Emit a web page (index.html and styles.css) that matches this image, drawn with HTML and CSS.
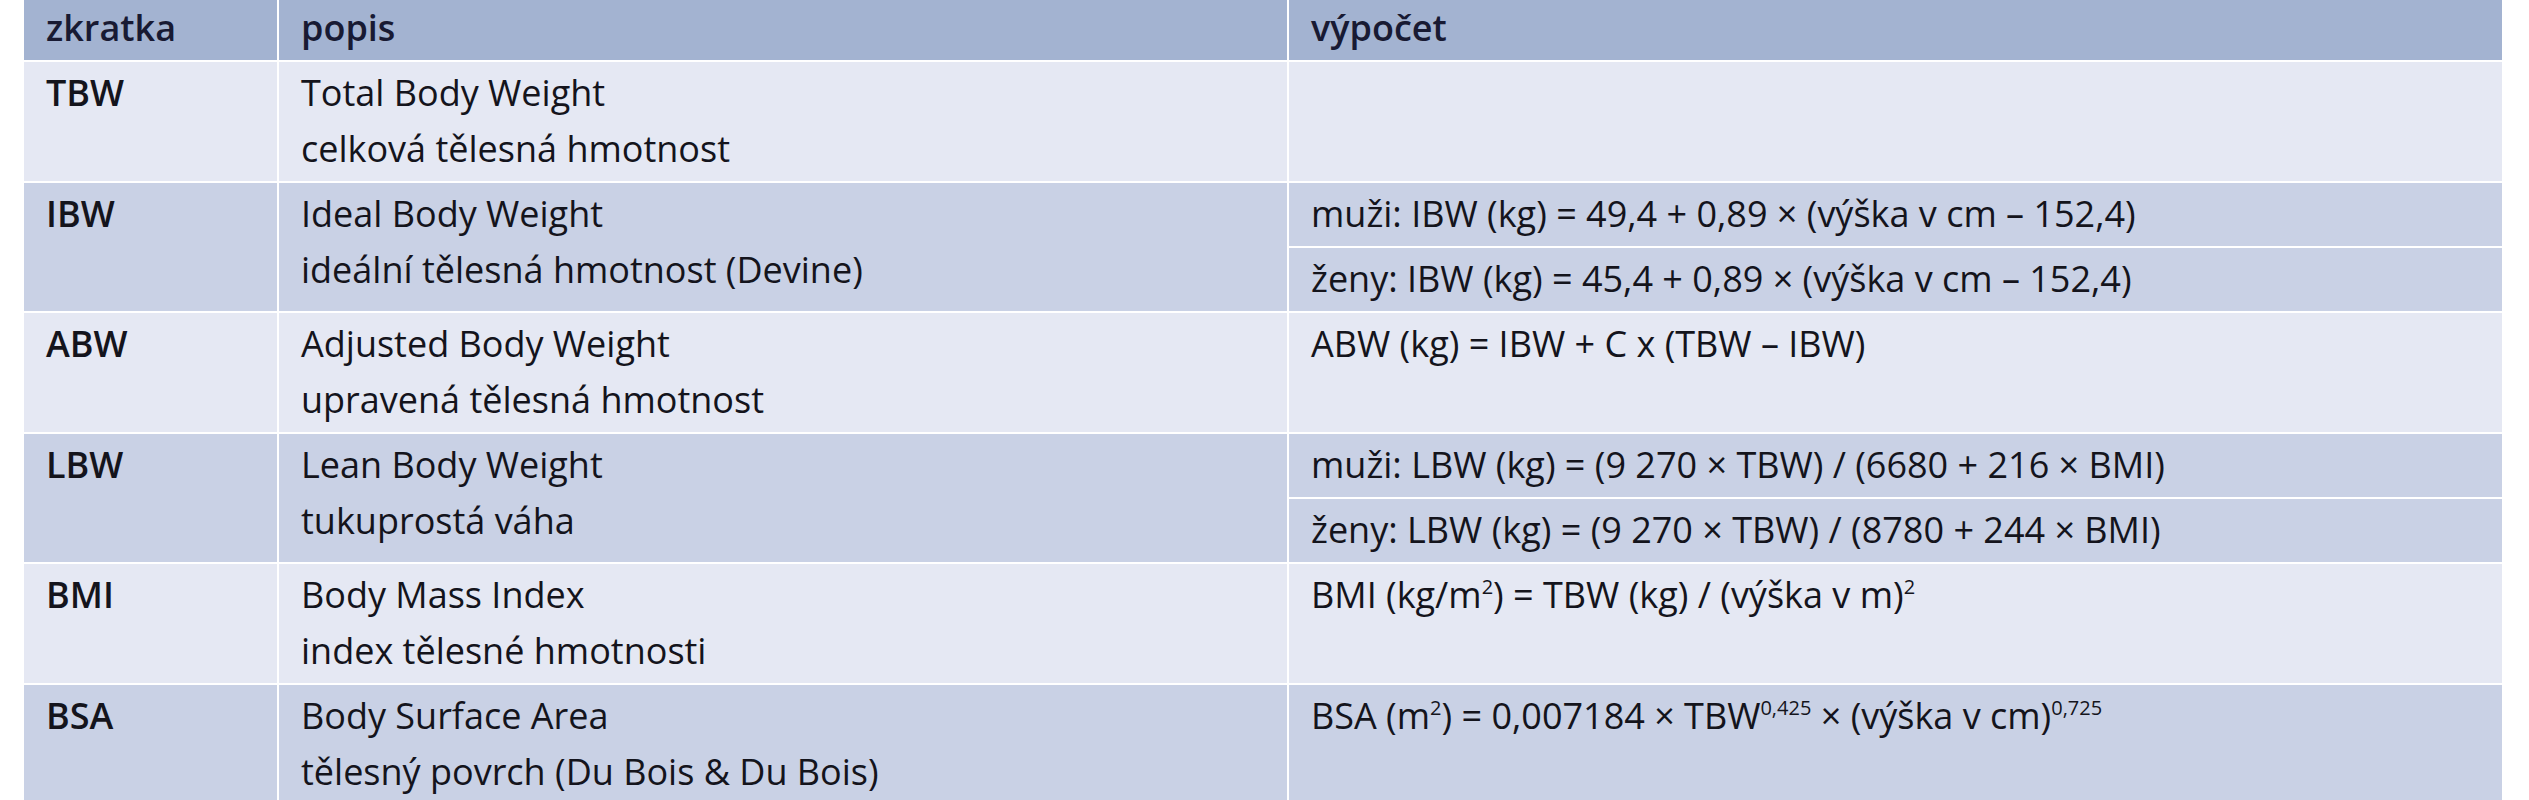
FILE: index.html
```html
<!DOCTYPE html>
<html lang="cs">
<head>
<meta charset="utf-8">
<title>Tělesná hmotnost</title>
<link rel="stylesheet" href="styles.css">
</head>
<body>
<table class="tbl">
  <colgroup>
    <col class="c1"><col class="c2"><col class="c3">
  </colgroup>
  <thead>
    <tr class="head">
      <th>zkratka</th><th>popis</th><th>výpočet</th>
    </tr>
  </thead>
  <tbody>
    <tr class="light">
      <td class="abbr">TBW</td>
      <td class="desc">Total Body Weight<br>celková tělesná hmotnost</td>
      <td class="calc"></td>
    </tr>
    <tr class="dark">
      <td class="abbr" rowspan="2">IBW</td>
      <td class="desc" rowspan="2">Ideal Body Weight<br>ideální tělesná hmotnost (Devine)</td>
      <td class="calc sub">muži: IBW (kg) = 49,4 + 0,89 × (výška v cm – 152,4)</td>
    </tr>
    <tr class="dark">
      <td class="calc sub">ženy: IBW (kg) = 45,4 + 0,89 × (výška v cm – 152,4)</td>
    </tr>
    <tr class="light">
      <td class="abbr">ABW</td>
      <td class="desc">Adjusted Body Weight<br>upravená tělesná hmotnost</td>
      <td class="calc">ABW (kg) = IBW + C x (TBW – IBW)</td>
    </tr>
    <tr class="dark">
      <td class="abbr" rowspan="2">LBW</td>
      <td class="desc" rowspan="2">Lean Body Weight<br>tukuprostá váha</td>
      <td class="calc sub">muži: LBW (kg) = (9 270 × TBW) / (6680 + 216 × BMI)</td>
    </tr>
    <tr class="dark">
      <td class="calc sub">ženy: LBW (kg) = (9 270 × TBW) / (8780 + 244 × BMI)</td>
    </tr>
    <tr class="light">
      <td class="abbr">BMI</td>
      <td class="desc">Body Mass Index<br>index tělesné hmotnosti</td>
      <td class="calc">BMI (kg/m<sup>2</sup>) = TBW (kg) / (výška v m)<sup>2</sup></td>
    </tr>
    <tr class="dark last">
      <td class="abbr">BSA</td>
      <td class="desc">Body Surface Area<br>tělesný povrch (Du Bois &amp; Du Bois)</td>
      <td class="calc">BSA (m<sup>2</sup>) = 0,007184 × TBW<sup>0,425</sup> × (výška v cm)<sup>0,725</sup></td>
    </tr>
  </tbody>
</table>
</body>
</html>
```
FILE: styles.css
```css
html, body {
  margin: 0;
  padding: 0;
  background: #ffffff;
}
body {
  font-family: "Open Sans", "Liberation Sans", sans-serif;
  font-size: 36px;
  color: #14141c;
  overflow: hidden;
}
.tbl {
  margin-left: 24px;
  width: 2478px;
  table-layout: fixed;
  border-collapse: separate;
  border-spacing: 0;
}
.c1 { width: 255px; }
.c2 { width: 1010px; }
.c3 { width: 1213px; }
.tbl th,
.tbl td {
  text-align: left;
  vertical-align: top;
  line-height: 56px;
  padding: 3px 20px 4px 22px;
  border-right: 2px solid #ffffff;
  border-bottom: 2px solid #ffffff;
  white-space: nowrap;
}
.tbl th:last-child,
.tbl td.calc {
  border-right: 0;
}
.head th {
  background: #a3b3d1;
  font-weight: 600;
  color: #181a33;
  padding-top: 0;
  padding-bottom: 4px;
}
.light td { background: #e5e8f3; }
.dark td { background: #c9d1e5; }
.abbr { font-weight: 600; }
.calc { padding-left: 21px; }
.sub { padding-bottom: 4px; }
sup {
  font-size: 20px;
  line-height: 0;
  vertical-align: 14px;
}
```
